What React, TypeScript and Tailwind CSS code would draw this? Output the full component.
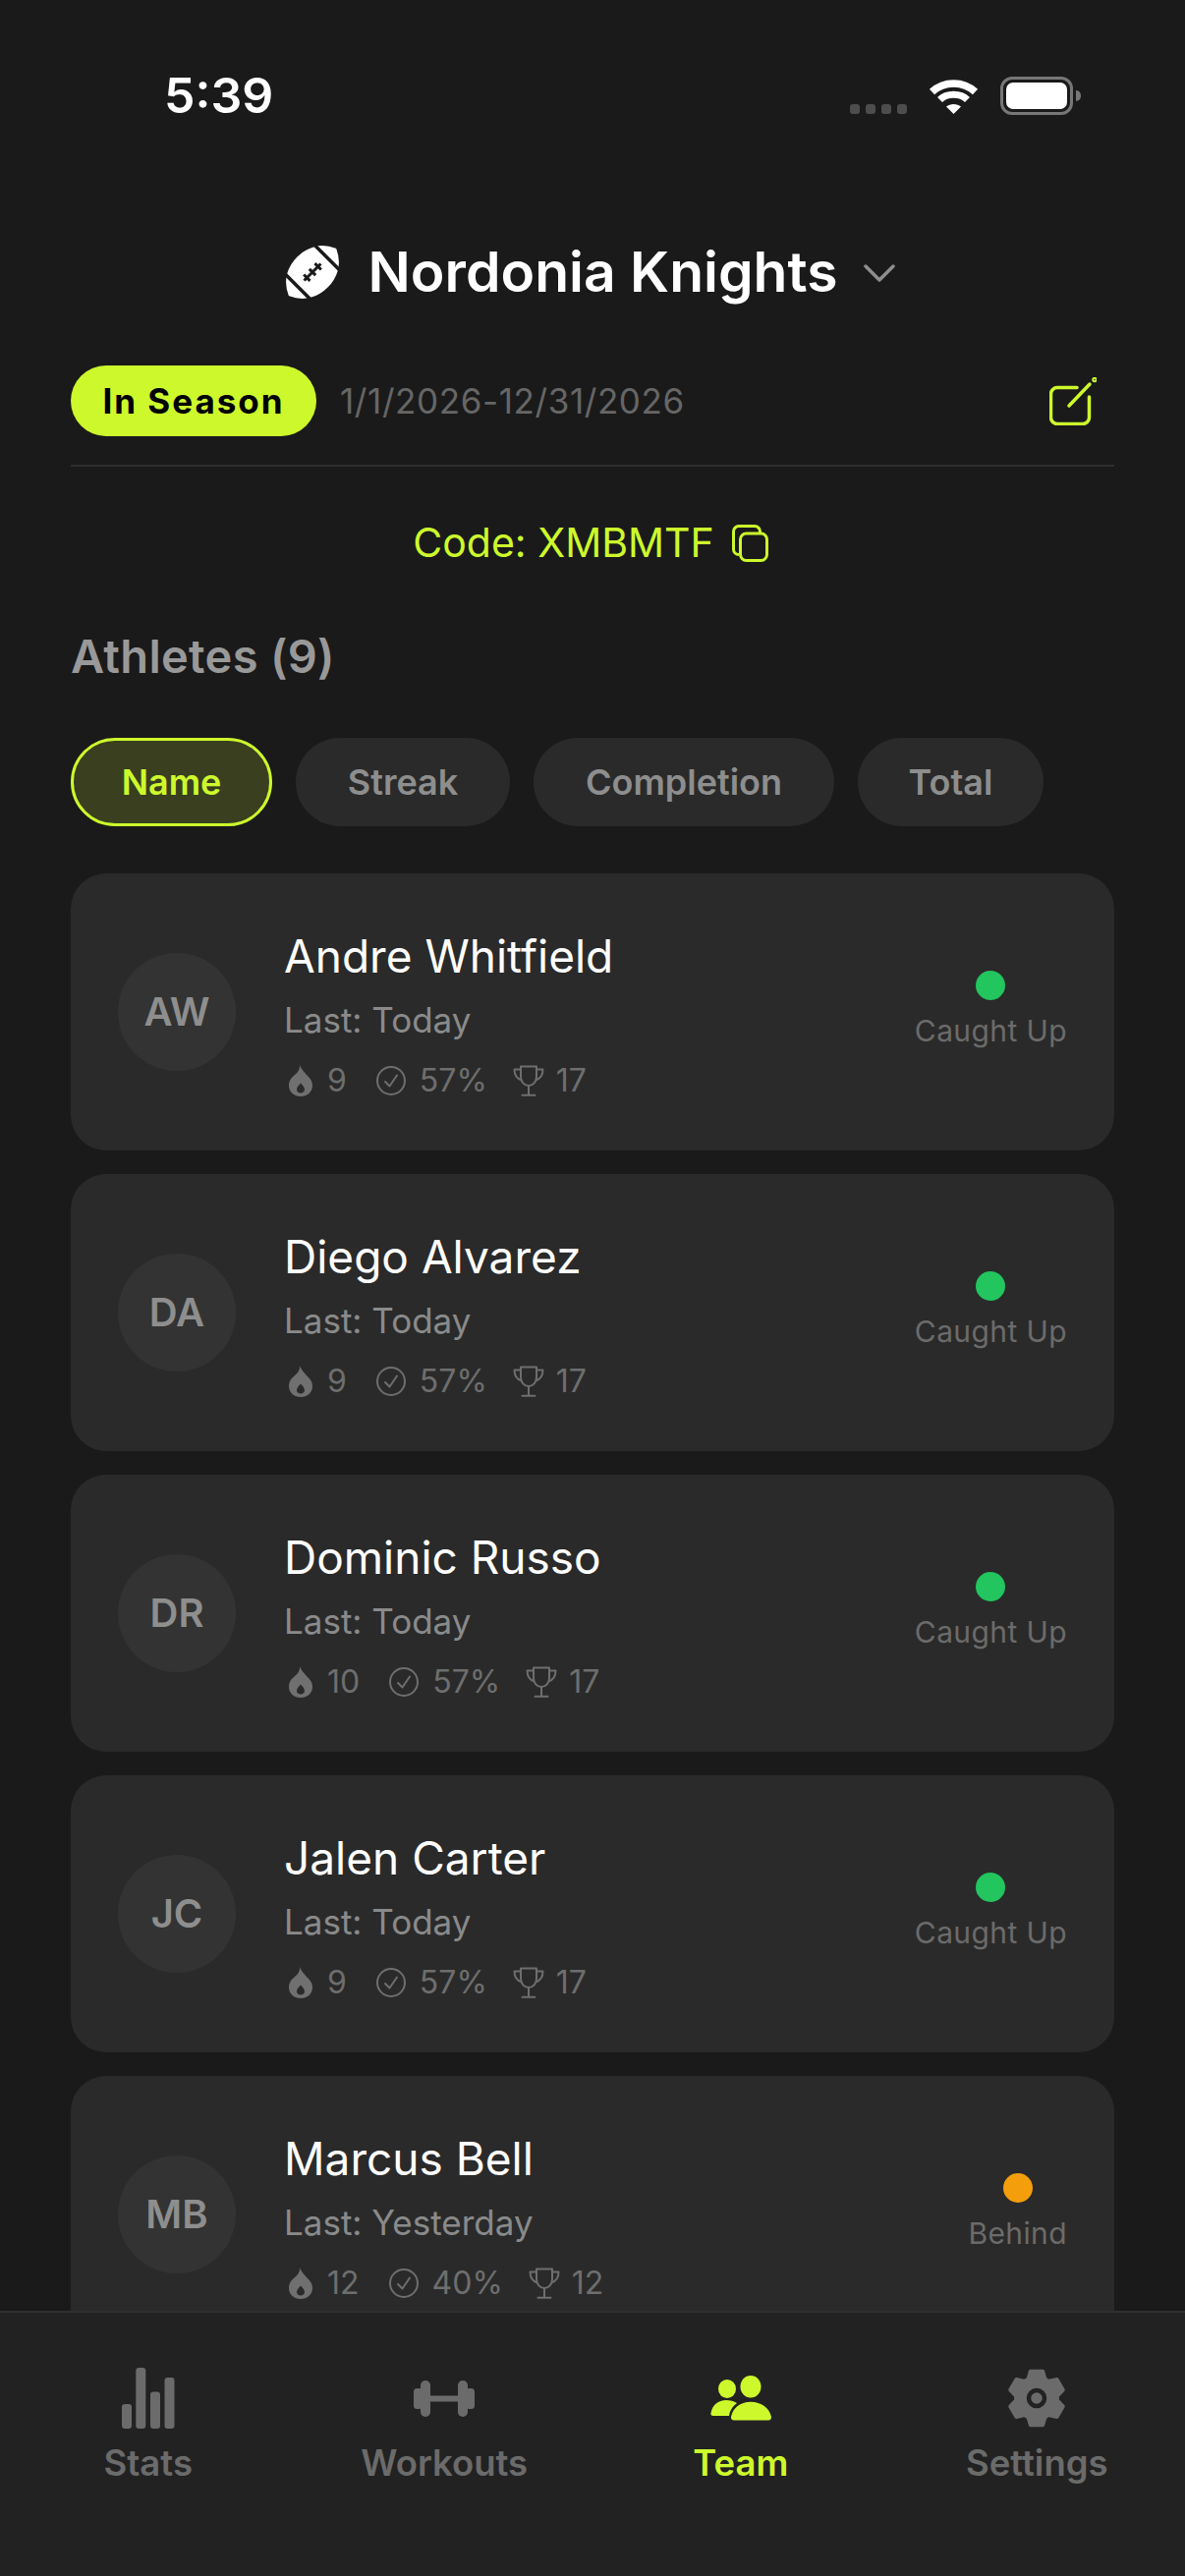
const LIME = '#cdf92c';

const athletes = [
  { initials: 'AW', name: 'Andre Whitfield', last: 'Today', streak: 9, pct: 57, total: 17, status: 'Caught Up' },
  { initials: 'DA', name: 'Diego Alvarez', last: 'Today', streak: 9, pct: 57, total: 17, status: 'Caught Up' },
  { initials: 'DR', name: 'Dominic Russo', last: 'Today', streak: 10, pct: 57, total: 17, status: 'Caught Up' },
  { initials: 'JC', name: 'Jalen Carter', last: 'Today', streak: 9, pct: 57, total: 17, status: 'Caught Up' },
  { initials: 'MB', name: 'Marcus Bell', last: 'Yesterday', streak: 12, pct: 40, total: 12, status: 'Behind' },
];

function Football() {
  return (
    <svg width="54" height="54" viewBox="-27 -27 54 54">
      <g transform="rotate(-45)">
        <path d="M-33 0C-26 -16 -12 -21 0 -21C12 -21 26 -16 33 0C26 16 12 21 0 21C-12 21 -26 16 -33 0Z" fill="#fff" stroke="#fff" strokeWidth="2" strokeLinejoin="round" />
        <path d="M-21 -24V24M21 -24V24" stroke="#1a1a1a" strokeWidth="3.5" />
        <path d="M-12 0H12M-8 -4.5V4.5M0 -4.5V4.5M8 -4.5V4.5" stroke="#1a1a1a" strokeWidth="3" />
      </g>
    </svg>
  );
}

function Wifi() {
  return (
    <svg width="51" height="37" viewBox="0 0 51 37" fill="none">
      <path d="M3.5 14.5C15.5 3 35.5 3 47.5 14.5" stroke="#fff" strokeWidth="7.5" />
      <path d="M11.5 22.5C18.5 15.5 32.5 15.5 39.5 22.5" stroke="#fff" strokeWidth="7" />
      <path d="M18 29.5C22 26 29 26 33 29.5L25.5 37Z" fill="#fff" />
    </svg>
  );
}

function Flame() {
  return (
    <svg width="24" height="32" viewBox="0 0 24 32" className="shrink-0">
      <path
        fillRule="evenodd"
        d="M11 0C13 5 15 6 18 10C21 13 24 16 24 21C24 27.5 18.5 32 12 32C5.5 32 0 27.5 0 21C0 16 2.5 13 5.5 10.500C8.500 8 11.500 5 11 0ZM12 18.500C9.800 21 8 22.800 8 25C8 27.200 9.800 28.500 12 28.500C14.200 28.500 16 27.200 16 25C16 22.800 14.200 21 12 18.500Z"
        fill="#707070"
      />
    </svg>
  );
}

function Check() {
  return (
    <svg width="30" height="30" viewBox="0 0 30 30" fill="none" stroke="#6e6e6e" strokeWidth="2" className="shrink-0">
      <circle cx="15" cy="15" r="14" />
      <path d="M9 16L13.500 20.500L21 9.500" strokeLinecap="round" strokeLinejoin="round" />
    </svg>
  );
}

function Trophy() {
  return (
    <svg width="32" height="32" viewBox="0 0 32 32" fill="none" stroke="#6e6e6e" strokeWidth="2" className="shrink-0">
      <path d="M8 1.500H24V12C24 17 20.500 21 16 21C11.500 21 8 17 8 12Z" strokeLinejoin="round" />
      <path d="M8 4.500H1.500C1.500 10 4 14 9 15.500M24 4.500H30.500C30.500 10 28 14 23 15.500" strokeLinejoin="round" />
      <path d="M16 21V30.500M9.500 30.800H22.500" strokeLinecap="round" />
    </svg>
  );
}

function StatsIcon() {
  return (
    <svg width="54" height="62" viewBox="0 0 54 62" fill="#6b6b6b">
      <rect x="0" y="37" width="10" height="25" rx="3" />
      <rect x="14.300" y="0" width="10" height="62" rx="3" />
      <rect x="29" y="24.500" width="10" height="37.500" rx="3" />
      <rect x="43.500" y="10" width="10" height="52" rx="3" />
    </svg>
  );
}

function DumbbellIcon() {
  return (
    <svg width="62" height="37" viewBox="0 0 62 37" fill="#6b6b6b">
      <rect x="0" y="8" width="9" height="21" rx="3.500" />
      <rect x="7" y="0" width="10" height="37" rx="5" />
      <rect x="15" y="15.500" width="32" height="6" />
      <rect x="45" y="0" width="10" height="37" rx="5" />
      <rect x="53" y="8" width="9" height="21" rx="3.500" />
    </svg>
  );
}

function TeamIcon() {
  return (
    <svg width="62" height="46" viewBox="0 0 62 46" fill={LIME}>
      <ellipse cx="17" cy="13.500" rx="9" ry="9.500" />
      <ellipse cx="41" cy="11.300" rx="10.500" ry="11.300" />
      <path d="M0.500 38C2 30 8 25 16 25C20 25 24 26 27 28C23 31 20 35 19 41H3C1 41 0 40 0.500 38Z" />
      <path d="M21 42C23 33 30 26.700 41 26.700C52 26.700 60 33 62 42C62 44 61 45.500 59 45.500H24C22 45.500 20.500 44 21 42Z" />
    </svg>
  );
}

function GearIcon() {
  // six teeth, one straight up
  const pts: string[] = [];
  for (let i = 0; i < 6; i++) {
    const a = (i * Math.PI) / 3;
    const at = (r: number, d: number) => {
      const t = a + d;
      return `${(29 + r * Math.sin(t)).toFixed(1)},${(30 - r * Math.cos(t)).toFixed(1)}`;
    };
    pts.push(at(21, -0.42), at(28, -0.22), at(28, 0.22), at(21, 0.42));
  }
  return (
    <svg width="58" height="60" viewBox="0 0 58 60">
      <polygon points={pts.join(' ')} fill="#6b6b6b" stroke="#6b6b6b" strokeWidth="4" strokeLinejoin="round" />
      <circle cx="29" cy="30" r="8" fill="none" stroke="#222222" strokeWidth="4.500" />
    </svg>
  );
}

function AthleteCard({ a }: { a: (typeof athletes)[number] }) {
  const behind = a.status === 'Behind';
  return (
    <div className="flex items-center h-[282px] shrink-0 rounded-[36px] bg-[#2a2a2a] px-[48px]">
      <div className="w-[120px] h-[120px] shrink-0 rounded-full bg-[#333333] flex items-center justify-center text-[40px] font-semibold text-[#8e8e8e]">
        {a.initials}
      </div>
      <div className="ml-[49px] flex flex-col">
        <div className="text-[46px] leading-[60px] text-white">{a.name}</div>
        <div className="mt-[13px] text-[35px] leading-[44px] text-[#8a8a8a]">Last: {a.last}</div>
        <div className="mt-[20px] -mb-[2px] pl-[5px] flex items-center gap-[26px] text-[32px] leading-[40px] text-[#6e6e6e]">
          <span className="flex items-center gap-[15px] mr-[4px]"><Flame />{a.streak}</span>
          <span className="flex items-center gap-[14px]"><Check />{a.pct}%</span>
          <span className="flex items-center gap-[12px]"><Trophy />{a.total}</span>
        </div>
      </div>
      <div className="ml-auto flex flex-col items-center -mt-[3px]">
        <div className={`w-[30px] h-[30px] rounded-full ${behind ? 'bg-[#f59e0b]' : 'bg-[#22c55e]'}`} />
        <div className="mt-[11px] text-[30px] leading-[40px] tracking-[0.4px] text-[#6b6b6b]">{a.status}</div>
      </div>
    </div>
  );
}

export default function App() {
  const tabs = [
    { label: 'Stats', icon: <StatsIcon />, active: false },
    { label: 'Workouts', icon: <DumbbellIcon />, active: false },
    { label: 'Team', icon: <TeamIcon />, active: true },
    { label: 'Settings', icon: <GearIcon />, active: false },
  ];

  return (
    <div className="h-[2622px] w-[1206px] flex flex-col overflow-hidden bg-[#1a1a1a] font-['Inter',sans-serif]">
      <div className="flex-1 min-h-0 overflow-hidden px-[72px]">
        {/* Status bar */}
        <div className="h-[194px] -mx-[72px] pl-[167px] pr-[106px] flex items-center justify-between">
          <span className="text-[50px] font-semibold text-white">5:39</span>
          <div className="flex items-center">
            <div className="flex gap-[6px] mt-[28px] mr-[22px]">
              <div className="w-[10px] h-[10px] rounded-[3px] bg-[#4d4d4d]" />
              <div className="w-[10px] h-[10px] rounded-[3px] bg-[#4d4d4d]" />
              <div className="w-[10px] h-[10px] rounded-[3px] bg-[#4d4d4d]" />
              <div className="w-[10px] h-[10px] rounded-[3px] bg-[#4d4d4d]" />
            </div>
            <Wifi />
            <div className="ml-[22px] w-[74px] h-[39px] rounded-[12px] border-[3px] border-[#777777] p-[3px]">
              <div className="w-full h-full rounded-[7px] bg-white" />
            </div>
            <div className="ml-[3px] w-[5px] h-[11px] rounded-r-full bg-[#777777]" />
          </div>
        </div>

        {/* Team picker */}
        <div className="h-[166px] flex items-center justify-center pr-[4px]">
          <Football />
          <span className="ml-[30px] text-[57px] font-semibold text-white">Nordonia Knights</span>
          <svg width="32" height="18" viewBox="0 0 32 18" fill="none" stroke="#8e8e8e" strokeWidth="3.500" strokeLinecap="round" strokeLinejoin="round" className="ml-[27px] mt-[2px]">
            <path d="M2 2L16 16L30 2" />
          </svg>
        </div>

        {/* Season row */}
        <div className="mt-[12px] pb-[29px] border-b-2 border-[#2f2f2f] flex items-center">
          <div className="h-[72px] w-[250px] rounded-full flex items-center justify-center text-[35px] font-bold tracking-[2px] text-black" style={{ backgroundColor: LIME }}>
            In Season
          </div>
          <span className="ml-[24px] text-[35px] tracking-[0.6px] text-[#666666]">1/1/2026-12/31/2026</span>
          <svg width="48" height="49" viewBox="0 0 48 49" fill="none" stroke={LIME} strokeWidth="3.500" strokeLinecap="round" className="ml-auto mr-[18px]">
            <path d="M28 10.500H8A6.500 6.500 0 0 0 1.500 17V41A6.500 6.500 0 0 0 8 47.500H34A6.500 6.500 0 0 0 40.500 41V20" />
            <path d="M20 29L41 7" />
            <circle cx="46" cy="2.500" r="1" />
          </svg>
        </div>

        {/* Join code */}
        <div className="mt-[38px] h-[80px] flex items-center justify-center pr-[4px] text-[41px]" style={{ color: LIME }}>
          Code: XMBMTF
          <svg width="37" height="38" viewBox="0 0 37 38" fill="none" stroke={LIME} strokeWidth="3" className="ml-[18px]">
            <path d="M7 30.500A5.500 5.500 0 0 1 1.500 25V7A5.500 5.500 0 0 1 7 1.500H23A5.500 5.500 0 0 1 28.500 7V8.500" />
            <rect x="8.500" y="9" width="27" height="27.500" rx="6" />
          </svg>
        </div>

        <div className="mt-[45px] h-[60px] flex items-center text-[47px] tracking-[0.3px] font-semibold text-[#999999]">Athletes (9)</div>

        {/* Sort chips */}
        <div className="mt-[53px] flex gap-[24px] text-[36px] font-semibold">
          <div className="w-[205px] h-[90px] rounded-full border-[3px] bg-[#3a3f1f] flex items-center justify-center" style={{ borderColor: LIME, color: LIME }}>Name</div>
          <div className="w-[218px] h-[90px] rounded-full bg-[#2a2a2a] flex items-center justify-center text-[#8e8e8e]">Streak</div>
          <div className="w-[306px] h-[90px] rounded-full bg-[#2a2a2a] flex items-center justify-center text-[#8e8e8e]">Completion</div>
          <div className="w-[189px] h-[90px] rounded-full bg-[#2a2a2a] flex items-center justify-center text-[#8e8e8e]">Total</div>
        </div>

        {/* Athlete list */}
        <div className="mt-[48px] flex flex-col gap-[24px]">
          {athletes.map((a) => (
            <AthleteCard key={a.initials} a={a} />
          ))}
        </div>
      </div>

      {/* Tab bar */}
      <div className="h-[270px] shrink-0 border-t-2 border-[#2f2f2f] bg-[#222222] grid grid-cols-4">
        {tabs.map((t) => (
          <div key={t.label} className="flex flex-col items-center pt-[55px]">
            <div className="h-[64px] flex items-center justify-center">{t.icon}</div>
            <div className="mt-[12px] text-[36.5px] leading-[44px] font-semibold" style={{ color: t.active ? LIME : '#6b6b6b' }}>
              {t.label}
            </div>
          </div>
        ))}
      </div>
    </div>
  );
}
